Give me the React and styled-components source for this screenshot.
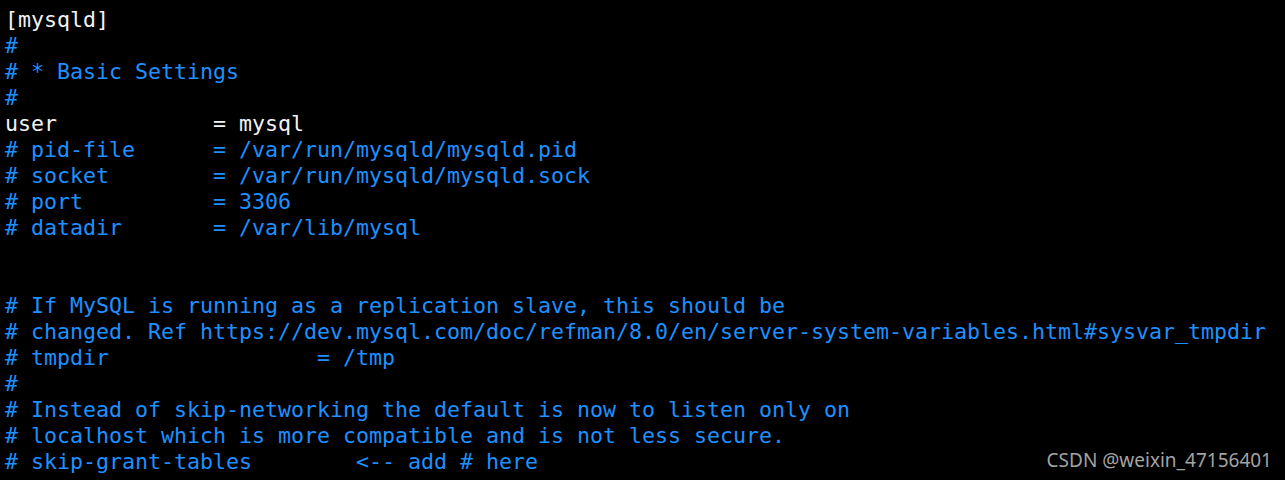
import React from 'react';
import styled, { createGlobalStyle } from 'styled-components';

const Global = createGlobalStyle`
  html, body {
    margin: 0;
    padding: 0;
    background: #000;
  }
`;

const Screen = styled.div`
  position: relative;
  height: 480px;
  background: #000;
  padding: 7px 0 0 5px;
  box-sizing: border-box;
  overflow: hidden;
`;

const Line = styled.div`
  font-family: "DejaVu Sans Mono", monospace;
  font-size: 21.6px;
  line-height: 26px;
  height: 26px;
  white-space: pre;
  color: ${(p) => (p.comment ? '#1e90ff' : '#f2f2f2')};
`;

const Watermark = styled.div`
  position: absolute;
  right: 13px;
  bottom: 7px;
  font-family: "Noto Sans", sans-serif;
  font-size: 19px;
  color: #a3a3a3;
`;

const lines = [
  ['[mysqld]', false],
  ['#', true],
  ['# * Basic Settings', true],
  ['#', true],
  ['user            = mysql', false],
  ['# pid-file      = /var/run/mysqld/mysqld.pid', true],
  ['# socket        = /var/run/mysqld/mysqld.sock', true],
  ['# port          = 3306', true],
  ['# datadir       = /var/lib/mysql', true],
  ['', false],
  ['', false],
  ['# If MySQL is running as a replication slave, this should be', true],
  ['# changed. Ref https://dev.mysql.com/doc/refman/8.0/en/server-system-variables.html#sysvar_tmpdir', true],
  ['# tmpdir                = /tmp', true],
  ['#', true],
  ['# Instead of skip-networking the default is now to listen only on', true],
  ['# localhost which is more compatible and is not less secure.', true],
  ['# skip-grant-tables        <-- add # here', true],
];

export default function App() {
  return (
    <Screen>
      <Global />
      {lines.map(([text, comment], i) => (
        <Line key={i} comment={comment}>{text}</Line>
      ))}
      <Watermark>CSDN @weixin_47156401</Watermark>
    </Screen>
  );
}
